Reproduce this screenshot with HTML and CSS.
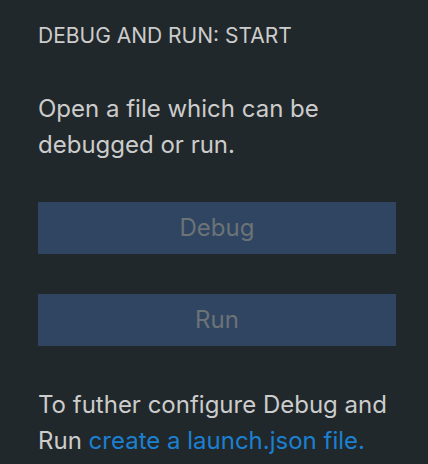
FILE: index.html
```html
<!DOCTYPE html>
<html lang="en">
<head>
<meta charset="utf-8">
<title>Debug and Run</title>
<link rel="stylesheet" href="styles.css">
</head>
<body>
<div class="view">
  <h2 class="view-title">DEBUG AND RUN: START</h2>
  <p class="message">Open a file which can be debugged or run.</p>
  <button class="action" type="button">Debug</button>
  <button class="action" type="button">Run</button>
  <p class="message footer">To futher configure Debug and Run <a class="link" href="#">create a launch.json file.</a></p>
</div>
</body>
</html>
```

FILE: styles.css
```css
html, body {
  margin: 0;
  padding: 0;
  background: #21282b;
  height: 100%;
}

.view {
  display: flex;
  flex-direction: column;
  padding: 21px 32px 0 38px;
  font-family: Inter, "Noto Sans", sans-serif;
  color: #cccccc;
}

.view-title {
  margin: 0;
  font-size: 21px;
  font-weight: 400;
  line-height: 30px;
  color: #cccccc;
}

.message {
  margin: 40px 0 0;
  font-size: 24px;
  line-height: 36px;
}

.action {
  display: block;
  width: 100%;
  height: 52px;
  margin: 39px 0 0;
  border: none;
  padding: 0;
  background: #2f4562;
  color: #6b7377;
  font-family: inherit;
  font-size: 24px;
  line-height: 50px;
  text-align: center;
}

.action + .action {
  margin-top: 40px;
}

.footer {
  margin-top: 41px;
}

.link {
  color: #1b80d1;
  text-decoration: none;
}
```
